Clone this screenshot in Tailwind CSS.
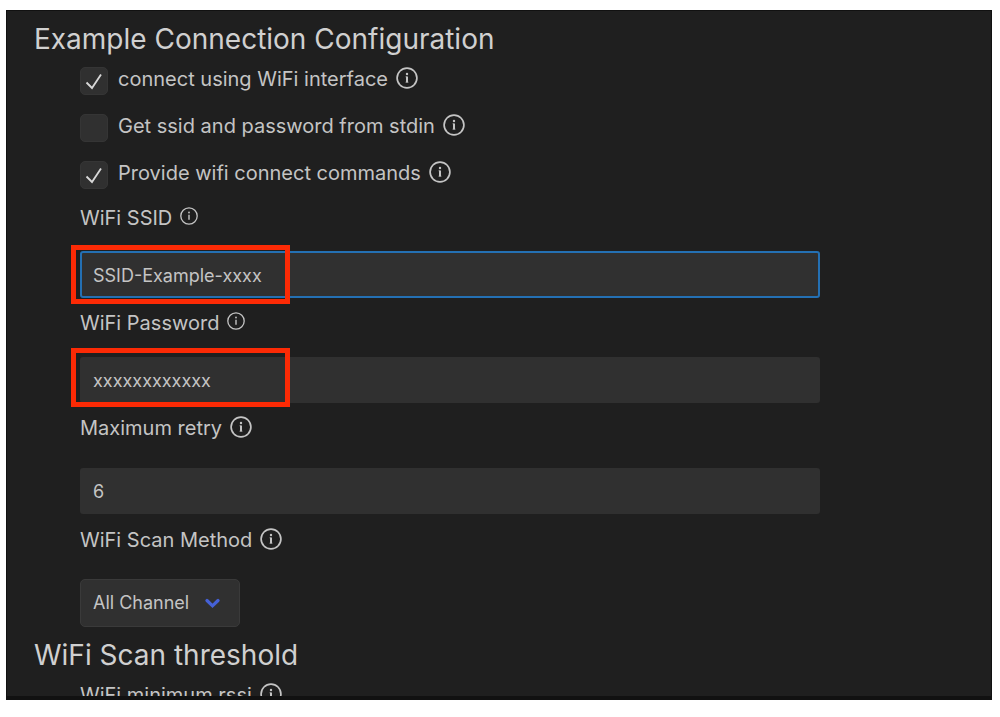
<!DOCTYPE html>
<html lang="en">
<head>
    <meta charset="UTF-8">
    <meta name="viewport" content="width=device-width, initial-scale=1.0">
    <title>SDK Configuration editor</title>
    <script src="https://cdn.jsdelivr.net/npm/@tailwindcss/browser@4"></script>
</head>
<body class="bg-white">
    <svg class="hidden">
        <symbol id="info" viewBox="0 0 22 22">
            <circle cx="11" cy="11" r="9.9" fill="none" stroke="currentColor" stroke-width="1.7"/>
            <path d="M11 9.4v6.200" fill="none" stroke="currentColor" stroke-width="2"/>
            <path d="M9.400 9.800h1.600M9.400 15.200h3.200" fill="none" stroke="currentColor" stroke-opacity="0.6" stroke-width="0.9"/>
            <circle cx="11" cy="7" r="1.200" fill="currentColor"/>
        </symbol>
        <symbol id="info-small" viewBox="0 0 18 18">
            <circle cx="9" cy="9" r="8.2" fill="none" stroke="currentColor" stroke-width="1.3"/>
            <path d="M9 7.800v5" fill="none" stroke="currentColor" stroke-width="1.4"/>
            <circle cx="9" cy="5.500" r="0.9" fill="currentColor"/>
        </symbol>
    </svg>

    <div class="h-screen pt-[10px] pr-2 pb-[17px] pl-[6px]">
        <main class="h-full overflow-hidden bg-[#1f1f1f] border-t border-r border-b-4 border-l border-[#111111] pt-[10px] pl-[27px] text-[#c4c4c4] font-['Inter',sans-serif] text-[20px] leading-7">
            <h2 class="text-[28px] leading-9 text-[#d0d0d0]">Example Connection Configuration</h2>

            <div class="pl-[46px] pr-[171px]">
                <div class="mt-[10px] flex flex-col gap-[19px]">
                    <div class="flex h-7 items-center gap-[10px]">
                        <span class="relative size-7 shrink-0">
                            <input id="use-wifi" type="checkbox" checked class="peer block size-7 appearance-none rounded-[5px] border border-[#353535] bg-[#303030]">
                            <svg class="pointer-events-none absolute inset-0 hidden size-7 peer-checked:block" viewBox="0 0 28 28" fill="none" stroke="#d8d8d8" stroke-width="1.8"><path d="M6.500 15.500l5.500 5.500L21 7.500"/></svg>
                        </span>
                        <div class="flex items-center gap-2 pb-1">
                            <label for="use-wifi">connect using WiFi interface</label>
                            <svg class="mb-[2px] size-[22px]"><use href="#info"/></svg>
                        </div>
                    </div>
                    <div class="flex h-7 items-center gap-[10px]">
                        <span class="relative size-7 shrink-0">
                            <input id="stdin" type="checkbox" class="peer block size-7 appearance-none rounded-[5px] border border-[#353535] bg-[#303030]">
                            <svg class="pointer-events-none absolute inset-0 hidden size-7 peer-checked:block" viewBox="0 0 28 28" fill="none" stroke="#d8d8d8" stroke-width="1.8"><path d="M6.500 15.500l5.500 5.500L21 7.500"/></svg>
                        </span>
                        <div class="flex items-center gap-2 pb-1">
                            <label for="stdin">Get ssid and password from stdin</label>
                            <svg class="mb-[2px] size-[22px]"><use href="#info"/></svg>
                        </div>
                    </div>
                    <div class="flex h-7 items-center gap-[10px]">
                        <span class="relative size-7 shrink-0">
                            <input id="commands" type="checkbox" checked class="peer block size-7 appearance-none rounded-[5px] border border-[#353535] bg-[#303030]">
                            <svg class="pointer-events-none absolute inset-0 hidden size-7 peer-checked:block" viewBox="0 0 28 28" fill="none" stroke="#d8d8d8" stroke-width="1.8"><path d="M6.500 15.500l5.500 5.500L21 7.500"/></svg>
                        </span>
                        <div class="flex items-center gap-2 pb-1">
                            <label for="commands">Provide wifi connect commands</label>
                            <svg class="mb-[2px] size-[22px]"><use href="#info"/></svg>
                        </div>
                    </div>
                </div>

                <div class="mt-[15px] flex items-center gap-2">
                    <label for="ssid">WiFi SSID</label>
                    <svg class="mb-1 size-[18px]"><use href="#info-small"/></svg>
                </div>
                <div class="relative mt-[19px]">
                    <input id="ssid" type="text" value="SSID-Example-xxxx" class="block h-[47px] w-full rounded-[3px] border-2 border-[#2470b3] bg-[#303030] px-[11px] pt-[2px] text-[18px] outline-none">
                    <div class="pointer-events-none absolute -top-[6px] -left-[9px] h-[59px] w-[219px] border-[5px] border-[#fc2a05]"></div>
                </div>

                <div class="mt-[11px] flex items-center gap-2">
                    <label for="password">WiFi Password</label>
                    <svg class="mb-1 size-[18px]"><use href="#info-small"/></svg>
                </div>
                <div class="relative mt-5">
                    <input id="password" type="text" value="xxxxxxxxxxxx" class="block h-[46px] w-full rounded-[3px] bg-[#303030] px-[13px] text-[18px] outline-none">
                    <div class="pointer-events-none absolute -top-[9px] -left-[9px] h-[59px] w-[219px] border-[5px] border-[#fc2a05]"></div>
                </div>

                <div class="mt-[11px] flex items-center gap-2">
                    <label for="retry">Maximum retry</label>
                    <svg class="mb-[2px] size-[22px]"><use href="#info"/></svg>
                </div>
                <input id="retry" type="text" inputmode="numeric" value="6" class="mt-[26px] block h-[46px] w-full rounded-[3px] bg-[#303030] px-[13px] text-[18px] outline-none">

                <div class="mt-3 flex items-center gap-2">
                    <label for="scan">WiFi Scan Method</label>
                    <svg class="mb-[2px] size-[22px]"><use href="#info"/></svg>
                </div>
                <div class="relative mt-[25px] w-[160px]">
                    <select id="scan" class="block h-12 w-full appearance-none rounded-[5px] border border-[#3a3a3a] bg-[#303030] pr-9 pl-3 text-[18px] outline-none">
                        <option>All Channel</option>
                        <option>Fast</option>
                    </select>
                    <svg class="pointer-events-none absolute top-[19px] right-5 h-[11px] w-[15px]" viewBox="0 0 15 11" fill="none" stroke="#4561d6" stroke-width="3.2" stroke-linecap="round"><path d="M2 2.500l5.500 5.300L13 2.500"/></svg>
                </div>
            </div>

            <h2 class="mt-[10px] text-[28px] leading-9 text-[#d0d0d0]">WiFi Scan threshold</h2>
            <div class="mt-2 flex items-center gap-2 pl-[46px]">
                <label for="rssi">WiFi minimum rssi</label>
                <svg class="mb-[2px] size-[22px]"><use href="#info"/></svg>
            </div>
            <input id="rssi" type="text" value="-127" class="mt-[26px] ml-[46px] block h-[46px] rounded-[3px] bg-[#303030] px-[13px] text-[18px] outline-none">
        </main>
    </div>
</body>
</html>
